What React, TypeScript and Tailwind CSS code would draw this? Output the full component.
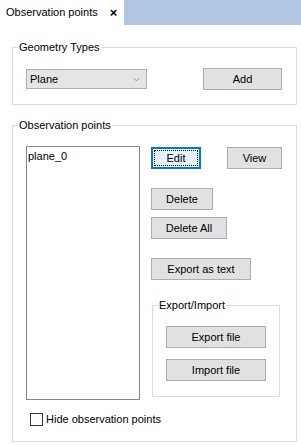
import { ChevronDown } from "lucide-react"

function WinButton({ label, className = "", focused = false }: { label: string; className?: string; focused?: boolean }) {
  if (focused) {
    return (
      <div className={`h-[22px] border-2 border-[#0078d7] bg-[#e5f1fb] p-[1px] ${className}`}>
        <div className="flex h-full w-full items-center justify-center border border-dotted border-black text-black">
          {label}
        </div>
      </div>
    )
  }
  return (
    <div className={`flex h-[22px] items-center justify-center border border-[#adadad] bg-[#e1e1e1] text-black ${className}`}>
      {label}
    </div>
  )
}

function GroupBox({ title, className = "", children }: { title: string; className?: string; children: React.ReactNode }) {
  return (
    <div className={`relative border border-[#dcdcdc] ${className}`}>
      <span className="absolute -top-[8px] left-[5px] bg-white px-[1px] leading-[14px] text-black">{title}</span>
      {children}
    </div>
  )
}

export default function App() {
  return (
    <div
      className="h-[445px] w-[301px] overflow-hidden whitespace-nowrap bg-white text-[11px] text-black"
      style={{ fontFamily: '"Liberation Sans", Arial, sans-serif' }}
    >
      {/* tab strip */}
      <div className="flex h-[25px] bg-[#b1c6e0]">
        <div className="flex w-[124px] items-center bg-white pl-[6px]">
          <span>Observation points</span>
          <span className="ml-[12px] text-[13px] font-bold leading-none">×</span>
        </div>
      </div>

      <div className="pl-[12px] pt-[22px]">
        <GroupBox title="Geometry Types" className="h-[58px] w-[285px]">
          <div className="mt-[21px] flex items-start pl-[13px]">
            <div className="flex h-[20px] w-[121px] items-center justify-between border border-[#adadad] bg-[#e5e5e5] pl-[3px] pr-[4px]">
              <span>Plane</span>
              <ChevronDown size={11} strokeWidth={1.4} className="text-[#666]" />
            </div>
            <WinButton label="Add" className="-mt-[1px] ml-[56px] w-[79px]" />
          </div>
        </GroupBox>

        <GroupBox title="Observation points" className="mt-[20px] h-[317px] w-[285px]">
          <div className="flex pl-[13px] pt-[20px]">
            <div className="h-[254px] w-[114px] border border-[#828790] bg-white pl-[1px] pt-[2px] leading-[14px]">
              plane_0
            </div>
            <div className="ml-[11px] flex flex-col pt-[1px]">
              <div className="flex">
                <WinButton label="Edit" focused className="w-[50px]" />
                <WinButton label="View" className="ml-[26px] w-[55px]" />
              </div>
              <WinButton label="Delete" className="mt-[19px] w-[62px]" />
              <WinButton label="Delete All" className="mt-[7px] w-[76px]" />
              <WinButton label="Export as text" className="mt-[19px] w-[100px]" />
              <GroupBox title="Export/Import" className="ml-[1px] mt-[25px] h-[92px] w-[128px]">
                <div className="flex flex-col pl-[13px] pt-[20px]">
                  <WinButton label="Export file" className="w-[100px]" />
                  <WinButton label="Import file" className="mt-[11px] w-[100px]" />
                </div>
              </GroupBox>
            </div>
          </div>
          <div className="mt-[11px] flex items-center pl-[17px]">
            <div className="h-[13px] w-[13px] border border-[#333] bg-white" />
            <span className="ml-[3px]">Hide observation points</span>
          </div>
        </GroupBox>
      </div>
    </div>
  )
}
